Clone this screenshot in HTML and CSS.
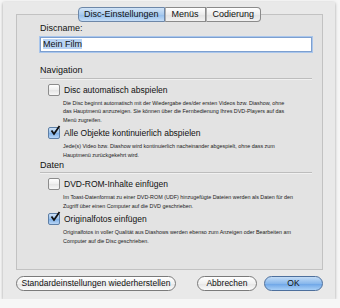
FILE: index.html
```html
<!DOCTYPE html>
<html lang="de">
<head>
    <meta charset="UTF-8">
    <title>Disc-Einstellungen</title>
    <link rel="stylesheet" href="styles.css">
</head>
<body>
    <div class="dialog">
        <div class="group">
            <div class="tabs">
                <div class="tab selected">Disc-Einstellungen</div>
                <div class="tab">Menüs</div>
                <div class="tab">Codierung</div>
            </div>

            <div class="content">
                <div class="label">Discname:</div>
                <div class="input"><span class="sel">Mein Film</span></div>

                <div class="section">Navigation</div>
                <div class="rule"></div>

                <div class="option">
                    <span class="box"></span>
                    <span>Disc automatisch abspielen</span>
                </div>
                <div class="desc">Die Disc beginnt automatisch mit der Wiedergabe des/der ersten Videos bzw. Diashow, ohne<br>das Hauptmenü anzuzeigen. Sie können über die Fernbedienung Ihres DVD-Players auf das<br>Menü zugreifen.</div>

                <div class="option">
                    <span class="box checked">
                        <svg viewBox="0 0 12 12" width="12" height="12"><path d="M2.5 5.5 L5 9 L10.5 1" fill="none" stroke="#111" stroke-width="1.8"/></svg>
                    </span>
                    <span>Alle Objekte kontinuierlich abspielen</span>
                </div>
                <div class="desc">Jede(s) Video bzw. Diashow wird kontinuierlich nacheinander abgespielt, ohne dass zum<br>Hauptmenü zurückgekehrt wird.</div>

                <div class="section">Daten</div>
                <div class="rule"></div>

                <div class="option">
                    <span class="box"></span>
                    <span>DVD-ROM-Inhalte einfügen</span>
                </div>
                <div class="desc">Im Toast-Datenformat zu einer DVD-ROM (UDF) hinzugefügte Dateien werden als Daten für den<br>Zugriff über einen Computer auf die DVD geschrieben.</div>

                <div class="option">
                    <span class="box checked">
                        <svg viewBox="0 0 12 12" width="12" height="12"><path d="M2.5 5.5 L5 9 L10.5 1" fill="none" stroke="#111" stroke-width="1.8"/></svg>
                    </span>
                    <span>Originalfotos einfügen</span>
                </div>
                <div class="desc">Originalfotos in voller Qualität aus Diashows werden ebenso zum Anzeigen oder Bearbeiten am<br>Computer auf die Disc geschrieben.</div>
            </div>
        </div>

        <div class="buttons">
            <div class="button wide">Standardeinstellungen wiederherstellen</div>
            <div class="button cancel">Abbrechen</div>
            <div class="button default">OK</div>
        </div>
    </div>
</body>
</html>
```

FILE: styles.css
```css
body {
    margin: 0;
    background: #f6f6f6;
    font-family: "Liberation Sans", Arial, sans-serif;
    color: #111;
}
.dialog {
    margin: 2px 0 0 3px;
    width: 332px;
    height: 297px;
    box-sizing: border-box;
    padding: 12px 12px 0 13px;
    background: #e9e9e9;
    box-shadow: 0 1px 3px rgba(0, 0, 0, 0.35);
}
.group {
    height: 256px;
    box-sizing: border-box;
    border: 1px solid #c2c2c2;
    background: #e3e3e3;
}
.tabs {
    display: flex;
    justify-content: center;
    margin: -8px 0 0 0;
}
.tab {
    height: 13px;
    line-height: 13px;
    padding: 0 6px;
    font-size: 9px;
    white-space: nowrap;
    border: 1px solid #8a8a8a;
    border-left: 1px solid #b0b0b0;
    background: linear-gradient(#ffffff, #ececec 50%, #e2e2e2 51%, #f2f2f2);
}
.tab:first-child {
    border-left: 1px solid #8a8a8a;
    border-radius: 4px 0 0 4px;
}
.tab:last-child {
    border-radius: 0 4px 4px 0;
}
.tab.selected {
    padding: 0 5px;
    background: linear-gradient(#d2e4f7, #a9cbef 50%, #92bdec 51%, #c4ddf7);
    border-color: #6d87a8;
}
.content {
    padding: 1px 10px 0 23px;
}
.label {
    font-size: 9px;
    line-height: 11px;
}
.input {
    margin-top: 3px;
    height: 13px;
    line-height: 13px;
    border: 1px solid #7d9fcf;
    box-shadow: 0 0 0 1px #a9c6ec;
    background: #fff;
    font-size: 9px;
    padding-left: 2px;
}
.sel {
    background: #b9d4f4;
}
.section {
    margin-top: 13px;
    font-size: 9px;
    line-height: 11px;
}
.desc + .section {
    margin-top: 0;
}
.rule {
    margin-top: 1.5px;
    border-top: 1px solid #bdbdbd;
    border-bottom: 1px solid #f1f1f1;
}
.option {
    display: flex;
    align-items: center;
    gap: 4px;
    margin: 3px 0 0 8px;
    font-size: 8.5px;
    line-height: 12px;
    white-space: nowrap;
}
.rule + .option {
    margin-top: 4px;
}
.box {
    position: relative;
    width: 10px;
    height: 10px;
    border: 1px solid #8c8c8c;
    border-radius: 2px;
    background: linear-gradient(#ffffff, #eeeeee 50%, #e4e4e4 51%, #f7f7f7);
}
.box.checked {
    background: linear-gradient(#cde1f6, #97c0ec 50%, #7eb0e8 51%, #b8d5f5);
    border-color: #5e7fa6;
}
.box svg {
    position: absolute;
    left: 0;
    top: -3px;
}
.desc {
    margin: 3px 0 0.5px 23px;
    font-size: 5.4px;
    line-height: 8.5px;
    white-space: nowrap;
    color: #222;
}
.buttons {
    display: flex;
    margin-top: 6px;
}
.button {
    height: 13px;
    line-height: 13px;
    border: 1px solid #7a7a7a;
    border-radius: 8px;
    background: linear-gradient(#ffffff, #f0f0f0 50%, #e4e4e4 51%, #fbfbfb);
    font-size: 8.5px;
    white-space: nowrap;
    text-align: center;
}
.button.wide {
    width: 158px;
}
.button.cancel {
    width: 58px;
    margin-left: 21px;
}
.button.default {
    width: 57px;
    margin-left: 7px;
    border-color: #4d6f9c;
    background: linear-gradient(#c3dcf6, #89b8ec 50%, #6aa3e6 51%, #a9d0f7);
}
```
